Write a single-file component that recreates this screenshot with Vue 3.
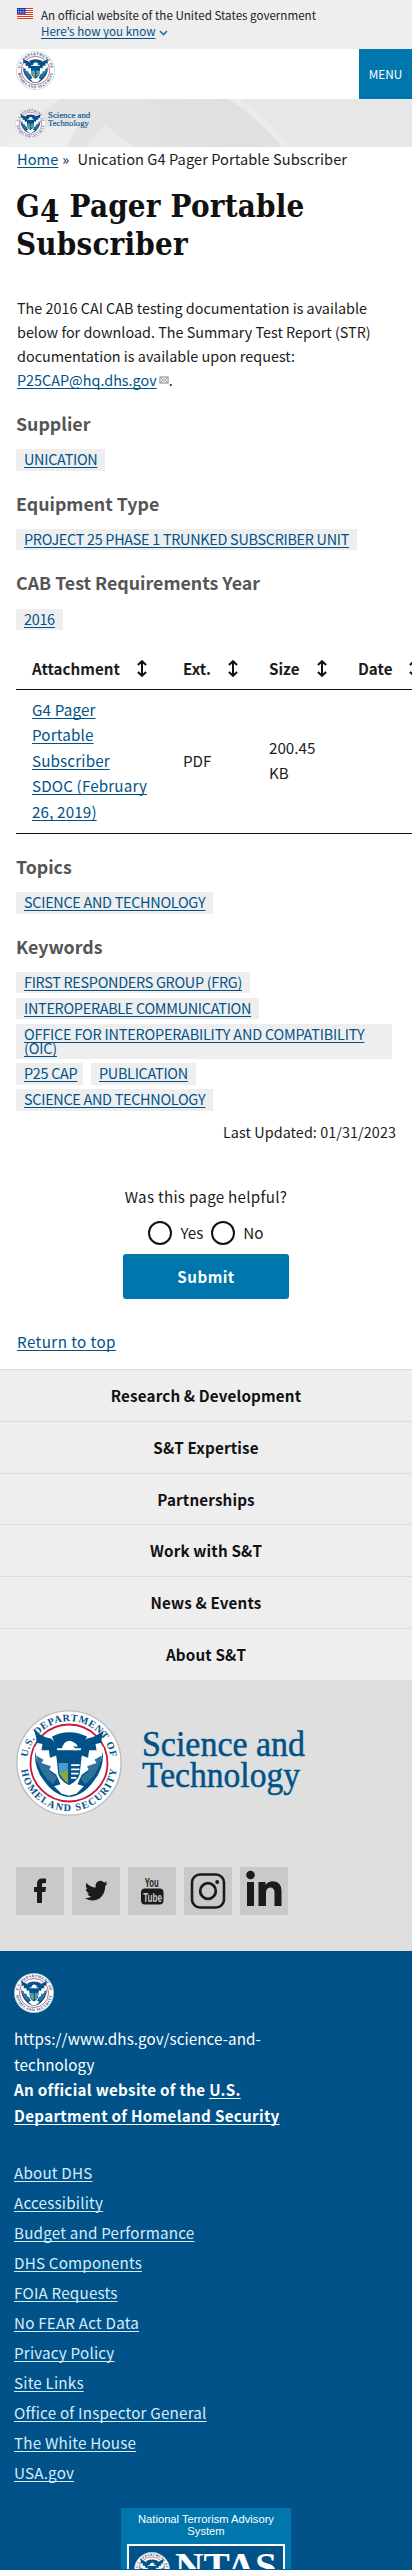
<script setup>
const columns = [
  { label: 'Attachment', cls: 'c1' },
  { label: 'Ext.', cls: 'c2' },
  { label: 'Size', cls: 'c3' },
  { label: 'Date', cls: 'c4' }
]
const navLinks = ['Research & Development', 'S&T Expertise', 'Partnerships', 'Work with S&T', 'News & Events', 'About S&T']
const siteLinks = ['About DHS', 'Accessibility', 'Budget and Performance', 'DHS Components', 'FOIA Requests', 'No FEAR Act Data', 'Privacy Policy', 'Site Links', 'Office of Inspector General', 'The White House', 'USA.gov']
</script>

<template>
  <svg class="defs" width="0" height="0" aria-hidden="true">
    <defs>
      <path id="arcTop" d="M10.5 50 A39.5 39.5 0 0 1 89.5 50" />
      <path id="arcBottom" d="M4.5 50 A45.5 45.5 0 0 0 95.5 50" />
      <symbol id="seal" viewBox="0 0 100 100">
        <circle cx="50" cy="50" r="49.2" fill="#fff" stroke="#b9bcc0" stroke-width="1.3" />
        <circle cx="50" cy="50" r="36.3" fill="none" stroke="#c8193c" stroke-width="1.7" />
        <path d="M18 39 Q17 55 26 66 Q36 81 50 82 Q64 81 74 66 Q83 55 82 39 L62 54 L38 54Z" fill="#005288" />
        <path d="M17 35 L28 44 L29 39 L43 53 L57 53 L71 39 L72 44 L83 35 L80 48 L62 61 L58 70 L64 72 L57 79 L50 81 L43 79 L36 72 L42 70 L38 61 L20 48Z" fill="#fff" />
        <path d="M19 43 L26 47 L24 50 L33 53 L31 57 L39 64 L35 70 Q22 61 19 43Z M81 43 L74 47 L76 50 L67 53 L69 57 L61 64 L65 70 Q78 61 81 43Z" fill="#31729d" />
        <path d="M17 19 Q24 25 33 27 Q37 30 39 38 L61 38 Q63 30 67 27 Q76 25 83 19 Q80 27 81 31 L75 32 L76 38 L69 38 L68 45 L62 43 L60 49 L40 49 L38 43 L32 45 L31 38 L24 38 L25 32 L19 31 Q20 27 17 19Z M34 25 Q50 17 67 25 L62 36 L38 36Z" fill="#005288" />
        <path d="M43 37 Q45 29 51 29 Q58 31 58 35 L54 34 L57 38Z" fill="#fff" />
        <path d="M38 43 H62 L60 61 Q57 68 50 71 Q43 68 40 61Z" fill="#005288" />
        <path d="M40 50 H49 V61 H41Z" fill="#4a9bc6" />
        <path d="M41 60 L49 57 V69 Q44 66 41 60Z" fill="#8fa63a" />
        <path d="M52 52 H60 M52 56 H60 M52 60 H59 M52 64 H57" stroke="#fff" stroke-width="1.5" />
        <text class="ring"><textPath href="#arcTop" startOffset="5.5" textLength="113">U.S. DEPARTMENT OF</textPath></text>
        <text class="ring"><textPath href="#arcBottom" startOffset="6.5" textLength="130">HOMELAND SECURITY</textPath></text>
      </symbol>
      <symbol id="sort" viewBox="0 0 10 17">
        <path d="M5 1.8V15.2M.9 5L5 1.2L9.1 5M.9 12L5 15.8L9.1 12" fill="none" stroke="#111" stroke-width="2" />
      </symbol>
    </defs>
  </svg>
  <div class="page">
    <div class="banner">
      <svg class="flag" viewBox="0 0 16 11">
        <rect width="16" height="11" fill="#fff" />
        <path d="M0 .5H16M0 2.5H16M0 4.5H16M0 6.5H16M0 8.5H16M0 10.5H16" stroke="#db3e1f" />
        <rect width="9" height="6" fill="#1e33b1" />
        <path d="M1 1.5H9M1 3.5H9M1 5H9" stroke="#fff" stroke-width=".8" stroke-dasharray=".8 1" />
      </svg>
      <div class="bannertext">
        <p>An official website of the United States government</p>
        <p><a class="know">Here’s how you know</a><svg class="chev" viewBox="0 0 9 6"><path d="M1 1L4.5 4.5L8 1" fill="none" stroke="#2a6d9c" stroke-width="1.6" /></svg></p>
      </div>
    </div>
    <header class="header">
      <svg class="hseal"><use href="#seal" /></svg>
      <button class="menu">MENU</button>
    </header>
    <div class="band">
      <svg class="bandbg" viewBox="0 0 412 48" preserveAspectRatio="none">
        <defs>
          <linearGradient id="g1"><stop offset="0" stop-color="#e5e5e5" /><stop offset=".6" stop-color="#e0e0e0" /><stop offset="1" stop-color="#e7e7e7" /></linearGradient>
        </defs>
        <rect width="412" height="48" fill="url(#g1)" />
        <path d="M0 48L60 0H0Z" fill="#ebebeb" />
        <path d="M0 48L16 34L80 22L67 48Z" fill="#eeeeee" />
        <path d="M105 26L135 48H85Z" fill="#eaeaea" />
        <path d="M228 0H412V48H284Q262 20 228 0Z" fill="#e7e7e7" />
        <path d="M228 0H240Q270 20 290 48H282Q260 20 228 0Z" fill="#ebebeb" />
      </svg>
      <svg class="bseal"><use href="#seal" /></svg>
      <svg class="bname" viewBox="0 0 170 80"><text x="0" y="35" textLength="163" lengthAdjust="spacingAndGlyphs">Science and</text><text x="0" y="66" textLength="158" lengthAdjust="spacingAndGlyphs">Technology</text></svg>
    </div>
    <main>
      <nav class="crumbs"><a>Home</a><span class="sep">»</span><span>Unication G4 Pager Portable Subscriber</span></nav>
      <h1>G<span class="old">4</span> Pager Portable<br>Subscriber</h1>
      <div class="intro">
        <p>The 2016 CAI CAB testing documentation is available</p>
        <p>below for download. The Summary Test Report (STR)</p>
        <p>documentation is available upon request:</p>
        <p><a>P25CAP@hq.dhs.gov</a><svg class="mail" viewBox="0 0 10 8"><rect x=".9" y="1" width="8.2" height="6" fill="#eee" stroke="#8b8b8b" /><path d="M1.5 1.5L5 4.6L8.5 1.5M1.5 6.5L4 4M8.5 6.5L6 4" fill="none" stroke="#8b8b8b" stroke-width=".8" /></svg>.</p>
      </div>
      <section><h3>Supplier</h3><a class="tag">UNICATION</a></section>
      <section><h3>Equipment Type</h3><a class="tag">PROJECT 25 PHASE 1 TRUNKED SUBSCRIBER UNIT</a></section>
      <section class="third"><h3>CAB Test Requirements Year</h3><a class="tag">2016</a></section>
      <div class="table">
        <div class="tr head">
          <div v-for="c in columns" :key="c.label" :class="['cell', c.cls]"><b>{{ c.label }}</b><svg class="sort"><use href="#sort" /></svg></div>
        </div>
        <div class="tr row">
          <div class="cell c1"><a>G4 Pager<br>Portable<br>Subscriber<br>SDOC (February<br>26, 2019)</a></div>
          <div class="cell c2">PDF</div>
          <div class="cell c3">200.45<br>KB</div>
          <div class="cell c4"></div>
        </div>
      </div>
      <section><h3>Topics</h3><a class="tag">SCIENCE AND TECHNOLOGY</a></section>
      <section class="kw">
        <h3>Keywords</h3>
        <div class="tags">
          <a class="tag">FIRST RESPONDERS GROUP (FRG)</a>
          <a class="tag">INTEROPERABLE COMMUNICATION</a>
          <a class="tag wide">OFFICE FOR INTEROPERABILITY AND COMPATIBILITY<br>(OIC)</a>
          <a class="tag p25">P25 CAP</a>
          <a class="tag">PUBLICATION</a>
          <a class="tag">SCIENCE AND TECHNOLOGY</a>
        </div>
      </section>
      <p class="updated">Last Updated: 01/31/2023</p>
      <form class="survey" @submit.prevent>
        <p>Was this page helpful?</p>
        <div class="radios"><i></i><label class="yes">Yes</label><i></i><label>No</label></div>
        <button>Submit</button>
      </form>
      <p class="return"><a>Return to top</a></p>
    </main>
    <nav class="fnav"><a v-for="n in navLinks" :key="n">{{ n }}</a></nav>
    <div class="brand">
      <div class="logo">
        <svg class="lseal"><use href="#seal" /></svg>
        <svg class="lname" viewBox="0 0 170 80"><text x="0" y="35" textLength="163" lengthAdjust="spacingAndGlyphs">Science and</text><text x="0" y="66" textLength="158" lengthAdjust="spacingAndGlyphs">Technology</text></svg>
      </div>
      <div class="social">
        <svg viewBox="0 0 48 48"><path d="M21 36V25H18V20H21V17Q21 11.5 26 11.5H30V16H27.5Q26 16 26 17.5V20H30L29.4 25H26V36Z" /></svg>
        <svg viewBox="0 0 48 48"><path d="M13 31.2Q17.5 31.2 19.3 29.6Q16.2 29 15.3 26.5H17.2Q14 25 13.8 21.8L15.7 22.3Q12.8 19.5 14.5 15.9Q18.5 20.3 23.7 20.5Q22.8 15.4 27 14Q30.2 13.2 32 15.4Q33.8 15 35 14.2Q34.7 16 33.2 17L35.5 16.4Q34.7 17.9 33.3 18.8Q33 27.5 27.5 31.5Q20.5 35.8 13 31.2Z" /></svg>
        <svg viewBox="0 0 48 48"><text class="you" x="16.8" y="20.2" textLength="14" lengthAdjust="spacingAndGlyphs">You</text><rect x="13" y="21.5" width="22.5" height="16" rx="4" /><text class="tube" x="15.2" y="34.5" textLength="18.8" lengthAdjust="spacingAndGlyphs">Tube</text></svg>
        <svg viewBox="0 0 48 48"><rect x="8" y="7.5" width="32" height="33" rx="8" fill="none" stroke="#1b1b1b" stroke-width="2.6" /><circle cx="24" cy="24" r="7.8" fill="none" stroke="#1b1b1b" stroke-width="2.8" /><circle cx="33.2" cy="15" r="2" /></svg>
        <svg viewBox="0 0 48 48"><circle cx="10.5" cy="8" r="4.3" /><path d="M7 15H14V39H7ZM18.5 15H25.5V18Q28 14.3 33 14.3Q41.5 14.8 41.5 24V39H34.5V26Q34.5 20.5 30.3 20.5Q26 20.7 26 26V39H18.5Z" /></svg>
      </div>
    </div>
    <footer>
      <svg class="fseal"><use href="#seal" /></svg>
      <div class="ident">
        <p>https://www.dhs.gov/science-and-</p>
        <p>technology</p>
        <p class="bold">An official website of the <a>U.S.</a></p>
        <p class="bold"><a>Department of Homeland Security</a></p>
      </div>
      <ul><li v-for="l in siteLinks" :key="l"><a>{{ l }}</a></li></ul>
      <div class="ntas">
        <p>National Terrorism Advisory<br>System</p>
        <div class="ntasbox">
          <svg class="nseal"><use href="#seal" /></svg>
          <svg class="nname" viewBox="0 0 104 40"><text x="0" y="27" textLength="102" lengthAdjust="spacingAndGlyphs">NTAS</text></svg>
        </div>
      </div>
    </footer>
  </div>
</template>

<style>
body { margin: 0; background: #fff; }
</style>

<style scoped>
* { box-sizing: border-box; }
p, h1, h3, ul { margin: 0; padding: 0; }
svg { display: block; flex: none; }
.defs { position: absolute; }
.page { width: 412px; height: 2570px; overflow: hidden; background: #fff; color: #1b1b1b; font: 14.4px/24px "Noto Sans CJK SC", sans-serif; white-space: nowrap; }
a { color: #005288; text-decoration: underline; text-underline-offset: 2px; text-decoration-thickness: 1px; text-decoration-skip-ink: none; }
.ring { font: bold 9.6px "Liberation Serif", serif; fill: #005288; }
.banner { height: 49px; background: #eee; display: flex; padding: 7px 0 0 17px; }
.flag { width: 16px; height: 11px; margin-top: 1px; }
.bannertext { margin-left: 8px; font-size: 11.6px; line-height: 16px; }
.bannertext p { display: flex; align-items: center; height: 16px; }
.know { font-family: "Noto Sans CJK KR", sans-serif; }
.chev { width: 9px; height: 6px; margin: 3px 0 0 4px; }
.header { height: 50px; display: flex; justify-content: space-between; }
.hseal { width: 39px; height: 39px; margin: 2px 0 0 16px; }
.menu { width: 53px; height: 50px; border: 0; padding: 0; background: #0076ad; color: #fff; font: 11.8px/50px "Noto Sans CJK SC", sans-serif; }
.band { height: 48px; display: flex; position: relative; padding: 9px 0 0 15px; }
.bandbg { position: absolute; left: 0; top: 0; width: 412px; height: 48px; }
.bseal { width: 31px; height: 31px; position: relative; }
.bname { width: 44px; height: 21px; margin: 1px 0 0 2px; position: relative; }
.bname text, .lname text { font: 35.5px "Liberation Serif", serif; fill: #005288; stroke: #005288; stroke-width: .5px; }
main { height: 1222px; }
.crumbs { height: 24px; display: flex; padding: 0 0 0 17px; font-size: 14.6px; letter-spacing: .07px; }
.sep { margin: 0 8px 0 4px; }
h1 { margin: 16px 0 0 16px; font: bold 31px/38.4px "DejaVu Serif Condensed", "DejaVu Serif", serif; letter-spacing: .2px; color: #111; }
.old { position: relative; top: 5px; }
.intro { margin: 32.2px 0 0 17px; }
.intro p { height: 24px; display: flex; align-items: center; }
.mail { width: 10px; height: 8px; margin: 0 0 0 2px; }
section { margin-left: 16px; height: 79.6px; }
.intro + section { margin-top: 19px; }
h3 { height: 38.4px; font-size: 17.8px; line-height: 24px; color: #555; font-weight: bold; }
.tag { display: block; width: max-content; background: #eee; padding: 3px 8px 4px; line-height: 14.4px; min-height: 21.5px; letter-spacing: -.28px; }
.third { height: 78.8px; }
.table { margin-left: 16px; width: 420px; font-size: 15.2px; line-height: 25.5px; }
.tr { display: flex; align-items: center; border-bottom: 1px solid #111; }
.head { height: 41px; }
.head .cell { display: flex; align-items: center; }
.row { height: 144px; }
.row .cell { padding-bottom: 2px; }
.cell { padding-left: 16px; }
.c1 { width: 151px; } .c2 { width: 86px; } .c3 { width: 89px; } .c4 { width: 90px; }
.row .c1 { letter-spacing: .15px; }
.sort { width: 10px; height: 17px; margin-left: 17px; }
.head .c1 .sort { margin: 0 20px 0 auto; }
.head .c1 { padding-right: 0; }
.table + section { margin-top: 20px; }
.kw { height: 186.4px; }
.tags { display: flex; flex-wrap: wrap; gap: 4.5px 8px; width: 376px; }
.wide { width: 376px; height: 35px; letter-spacing: -.18px; }
.p25 { width: 67px; margin-right: 0; }
.updated { width: 396px; text-align: right; letter-spacing: .06px; }
.survey { margin-top: 40px; display: flex; flex-direction: column; align-items: center; font-size: 15.2px; }
.survey p { letter-spacing: .26px; }
.radios { display: flex; align-items: center; height: 24px; margin-top: 13px; }
.radios i { width: 24px; height: 24px; border: 2px solid #111; border-radius: 50%; margin-right: 8px; }
.radios label { margin-top: -2px; }
.radios .yes { margin-right: 8px; }
.survey button { width: 166px; height: 45px; margin-top: 9px; border: 0; border-radius: 3px; padding: 0; background: #0076ad; color: #fff; font: bold 15.2px/43px "Noto Sans CJK SC", sans-serif; letter-spacing: .45px; }
.return { margin: 30px 0 0 17px; font-size: 15.2px; letter-spacing: .42px; }
.fnav { height: 311px; background: #eee; display: flex; flex-direction: column; }
.fnav a { height: 51.8px; border-top: 1px solid #dcdcdc; color: #111; font-weight: bold; font-size: 15.2px; line-height: 51px; text-align: center; text-decoration: none; letter-spacing: .15px; }
.brand { height: 271px; background: #dfdfdf; border-bottom: 1px solid #d5e1ea; }
.logo { display: flex; padding: 30px 0 0 16px; height: 187px; }
.lseal { width: 106px; height: 106px; }
.lname { width: 170px; height: 80px; margin: 11px 0 0 20px; }
.social { display: flex; gap: 8px; margin-left: 16px; }
.social svg { width: 48px; height: 48px; background: #c9c9c9; fill: #1b1b1b; }
.you { font: bold 12px "Liberation Sans", sans-serif; }
.tube { font: bold 13px "Liberation Sans", sans-serif; fill: #c9c9c9; }
footer { height: 619px; background: #005288; color: #fff; padding: 22px 0 0 14px; font-size: 15.2px; display: flex; flex-direction: column; }
footer a { color: #fff; }
.fseal { width: 40px; height: 40px; }
.ident { margin-top: 13px; line-height: 25.6px; letter-spacing: .08px; }
.bold { font-weight: bold; letter-spacing: .3px; }
ul { list-style: none; margin-top: 29px; letter-spacing: .2px; }
li { height: 30px; line-height: 30px; }
li a { color: #d5ecfb; }
.ntas { width: 170px; margin: 21px 0 0 107px; background: #0076ad; padding: 5px 6px 0; height: 61px; flex: none; overflow: hidden; }
.ntas p { font: 11.2px/12px "Liberation Sans", sans-serif; text-align: center; }
.ntasbox { margin-top: 7px; height: 80px; border: 2px solid #fff; background: #005288; display: flex; padding: 6px 0 0 5px; }
.nseal { width: 36px; height: 36px; }
.nname { width: 104px; height: 40px; margin-left: 5px; }
.nname text { font: bold 37px "Liberation Serif", serif; fill: #fff; }
</style>
